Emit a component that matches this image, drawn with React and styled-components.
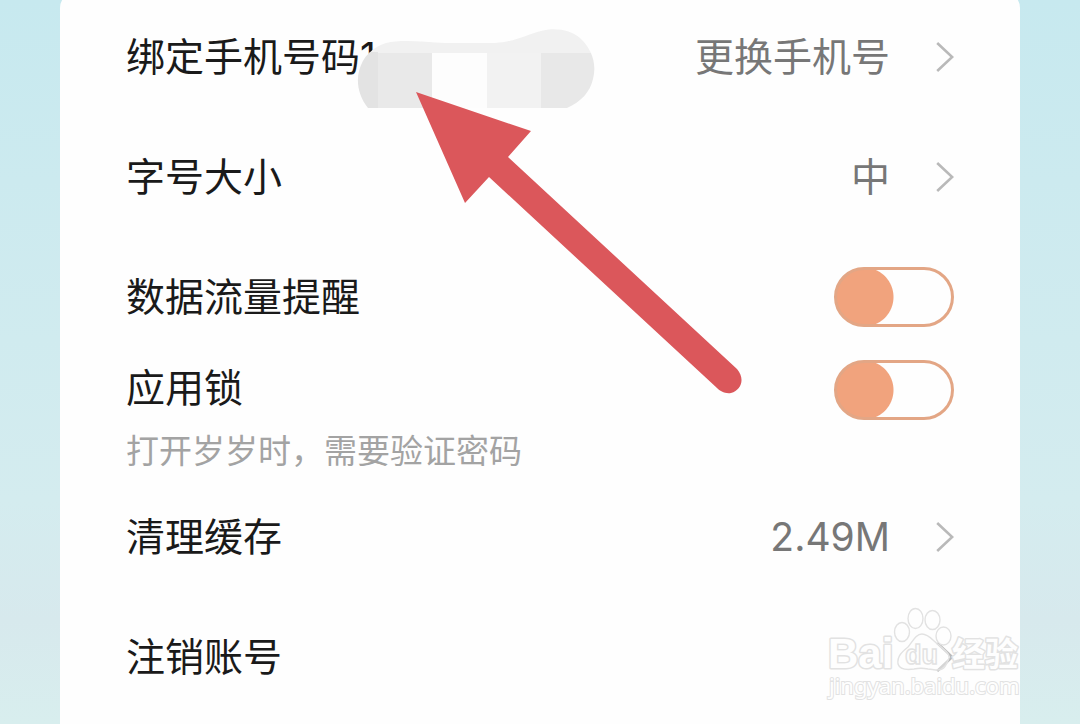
import React from "react";
import styled, { createGlobalStyle } from "styled-components";

const GlobalStyle = createGlobalStyle`
  * { box-sizing: border-box; }
  body {
    margin: 0;
    font-family: Inter, "Noto Sans CJK SC", sans-serif;
    color: #1a1a1a;
  }
`;

const Page = styled.div`
  position: relative;
  min-height: 100vh;
  display: flex;
  padding: 0 60px;
  overflow: hidden;
  background: linear-gradient(180deg, #c7e9ef 0, #cceaef 180px, #d4ecef 500px, #d7e9ed 620px, #d8eeee 724px);
`;

const Card = styled.main`
  flex: 1;
  margin-top: -8px;
  padding: 5px 66px 0;
  border-radius: 16px 16px 0 0;
  background: #fefefe;
`;

const Row = styled.div`
  display: flex;
  align-items: ${(p) => (p.$top ? "flex-start" : "center")};
  justify-content: space-between;
  min-height: 120px;
  padding-top: ${(p) => (p.$top ? "3px" : "0")};
`;

const Title = styled.label`
  display: block;
  font-size: 39px;
  line-height: 56px;
  white-space: nowrap;
`;

const Note = styled.p`
  margin: 9px 0 0;
  font-size: 33px;
  line-height: 52px;
  color: #a3a3a3;
`;

const LinkButton = styled.button`
  display: flex;
  align-items: center;
  gap: 46px;
  padding: 0;
  border: 0;
  background: none;
  color: #777;
  font-family: inherit;
  font-size: 39px;
  line-height: 56px;
  cursor: pointer;
`;

const Switch = styled.input`
  appearance: none;
  width: 120px;
  height: 60px;
  margin: 0;
  border: 3px solid #e3a685;
  border-radius: 30px;
  background: radial-gradient(circle at 30px 30px, #f1a37d 29px, transparent 30px) border-box;
  cursor: pointer;
`;

const Pointer = styled.svg`
  position: absolute;
  top: 0;
  left: 340px;
  pointer-events: none;
`;

const Watermark = styled.svg`
  position: absolute;
  top: 600px;
  right: 58px;
  pointer-events: none;
`;

const Chevron = () => (
  <svg width="18" height="30" viewBox="0 0 18 30" fill="none" stroke="#b9b9b9" strokeWidth="2.6" aria-hidden="true">
    <path d="M1.2 1L16.2 15L1.2 29" />
  </svg>
);

const LinkRow = ({ id, title, value }) => (
  <Row>
    <Title htmlFor={id}>{title}</Title>
    <LinkButton id={id} type="button">
      {value}
      <Chevron />
    </LinkButton>
  </Row>
);

const SwitchRow = ({ id, title, note, top }) => (
  <Row $top={top}>
    <div>
      <Title htmlFor={id}>{title}</Title>
      {note && <Note>{note}</Note>}
    </div>
    <Switch id={id} type="checkbox" role="switch" />
  </Row>
);

const Annotation = () => (
  <Pointer width="420" height="410" viewBox="340 0 420 410" aria-hidden="true">
    <defs>
      <clipPath id="smudge">
        <path d="M368 108C359 97 356 83 359 71C363 56 373 47 386 43C402 39 425 42 445 43L495 43C515 42 528 34 541 31C555 27 571 30 580 38C592 49 597 64 593 79C590 92 581 102 567 108Z" />
      </clipPath>
    </defs>
    <g clipPath="url(#smudge)">
      <rect x="350" y="20" width="250" height="34" fill="#f1f1f1" />
      <rect x="350" y="52" width="28" height="60" fill="#e3e3e3" />
      <rect x="378" y="53" width="54" height="60" fill="#e9e9e9" />
      <rect x="432" y="53" width="55" height="60" fill="#fdfdfd" />
      <rect x="487" y="53" width="54" height="60" fill="#f2f2f2" />
      <rect x="541" y="53" width="60" height="60" fill="#e8e8e8" />
    </g>
    <path fill="#db575b" d="M416 92L531 131L508 157L737 369C745 378 742 390 731 393C725 394 720 391 717 388L489 177L465 203Z" />
  </Pointer>
);

const BaiduMark = () => (
  <Watermark width="202" height="110" viewBox="820 600 202 110" aria-hidden="true">
    <g fill="#fefefe" stroke="#e2e2e2" strokeWidth="1.4">
      <ellipse cx="902" cy="632" rx="7.5" ry="9.5" />
      <ellipse cx="915.5" cy="618.5" rx="7.5" ry="10" />
      <ellipse cx="932.5" cy="620" rx="7.5" ry="9.5" />
      <ellipse cx="943.5" cy="636" rx="7.5" ry="9" />
      <path fillOpacity="0.4" d="M922 634C929 634 933 641 939 645C945 650 950 654 949 658C947 663 945 670 938 670C934 670 931 669 928 669C923 668 919 668 914 669C907 670 900 670 898 664C897 656 902 652 908 647C913 641 916 634 922 634Z" />
      <g fontWeight="700" strokeWidth="3" paintOrder="stroke" strokeLinejoin="round">
        <text x="828" y="668" fontSize="42" fontFamily="Liberation Sans">Bai</text>
        <text x="952" y="666" fontSize="33" fontFamily="Noto Sans CJK SC">经验</text>
      </g>
      <text x="905" y="664" fontSize="27" fontWeight="700" fontFamily="Liberation Sans">du</text>
      <text x="829" y="694" fontSize="22" fontFamily="Noto Sans" strokeWidth="2" paintOrder="stroke">jingyan.baidu.com</text>
    </g>
  </Watermark>
);

export default function App() {
  return (
    <>
      <GlobalStyle />
      <Page>
        <Card>
          <LinkRow id="phone" title="绑定手机号码1" value="更换手机号" />
          <LinkRow id="size" title="字号大小" value="中" />
          <SwitchRow id="data" title="数据流量提醒" />
          <SwitchRow id="lock" title="应用锁" note="打开岁岁时，需要验证密码" top />
          <LinkRow id="cache" title="清理缓存" value="2.49M" />
          <LinkRow id="close" title="注销账号" />
        </Card>
        <Annotation />
        <BaiduMark />
      </Page>
    </>
  );
}
